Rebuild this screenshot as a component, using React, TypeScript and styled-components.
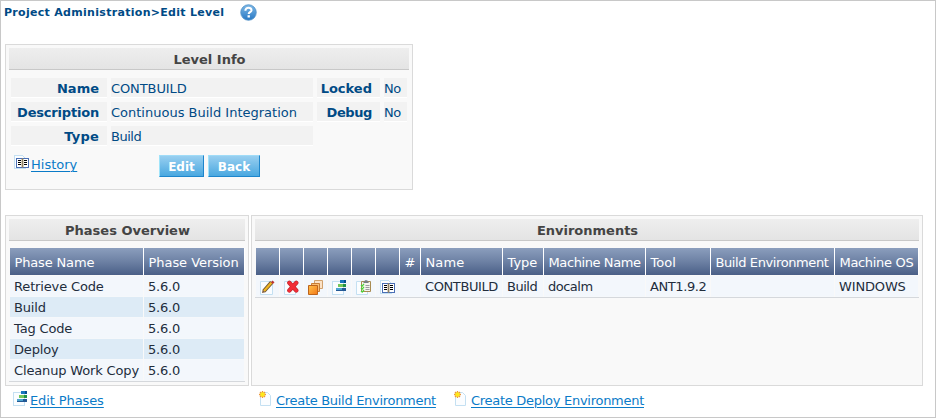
import React from "react";
import styled, { createGlobalStyle } from "styled-components";

const Global = createGlobalStyle`
  * { box-sizing: border-box; }
  body { margin: 0; background: #fff; font: 13px/16px Verdana, "DejaVu Sans", sans-serif; color: #263238; }
`;

const Page = styled.main`
  width: 936px;
  height: 418px;
  border: 1px solid #c8c8c8;
  padding: 0 4px;
`;

const TitleBar = styled.header`
  display: flex;
  height: 43px;
  margin-left: -1px;
  padding-top: 3px;
  color: #004a85;
`;

const Title = styled.h1`
  margin: 0 15px 0 0;
  width: 221px;
  white-space: nowrap;
  font-size: 11px;
  line-height: 18px;
  letter-spacing: 0.3px;
`;

const Panel = styled.section<{ $w: number; $h: number }>`
  width: ${p => p.$w}px;
  height: ${p => p.$h}px;
  border: 1px solid #dadada;
  background: #f9f9f9;
  padding: 3px;
`;

const PanelTitle = styled.h2`
  margin: 0;
  height: 22px;
  padding-left: 1px;
  border-bottom: 1px solid #c8c8c8;
  background: linear-gradient(#eee, #e4e4e4);
  color: #444;
  font-size: 13px;
  line-height: 23px;
  text-align: center;
`;

const InfoGrid = styled.div`
  display: grid;
  grid-template-columns: 96px 202px 63px 23px;
  grid-auto-rows: 20px;
  gap: 4px;
  margin: 8px 2px 0;
  color: #004a85;
`;

const InfoValue = styled.div<{ $ls?: number }>`
  background: #f2f2f2;
  border-bottom: 1px solid #fff;
  line-height: 21px;
  white-space: nowrap;
  letter-spacing: ${p => p.$ls ?? 0}px;
`;

const InfoLabel = styled(InfoValue)`
  text-align: right;
  padding-right: 8px;
  font-weight: bold;
`;

const Actions = styled.div`
  display: flex;
  margin: 9px 0 0 5px;
`;

const HistorySlot = styled.div`
  display: flex;
  gap: 1px;
  width: 145px;
`;

const Link = styled.a<{ $ls?: number }>`
  color: #0a7bc8;
  text-decoration: underline;
  text-underline-offset: 2px;
  text-decoration-thickness: 1px;
  white-space: nowrap;
  padding-top: 2px;
  letter-spacing: ${p => p.$ls ?? 0}px;
`;

const Button = styled.button<{ $w: number }>`
  width: ${p => p.$w}px;
  height: 22px;
  margin: 0 4px 0 0;
  padding: 2px 0 0;
  border: 1px solid;
  border-color: #a0dcf8 #1e86cc #1e86cc #a0e4fa;
  background: linear-gradient(#98cff0, #4aa8e0);
  color: #fff;
  font: bold 12px/18px Verdana, "DejaVu Sans", sans-serif;
`;

const Columns = styled.div`
  display: flex;
  gap: 2px;
  margin-top: 25px;
`;

const Table = styled.div<{ $cols: string }>`
  display: grid;
  grid-template-columns: ${p => p.$cols};
  column-gap: 1px;
  margin-top: 7px;
  padding: 0 1px;
  border-bottom: 1px solid #d5d8dc;
  background: #f9f9f9;
`;

const HeadCell = styled.div<{ $ls?: number }>`
  height: 27px;
  margin-bottom: 1px;
  padding-left: 4.5px;
  background: linear-gradient(#8b9ebd, #6d81a4 50%, #4a5f87);
  box-shadow: 1px 0 #fff;
  color: #fff;
  line-height: 29px;
  white-space: nowrap;
  letter-spacing: ${p => p.$ls ?? 0}px;
`;

const Cell = styled.div<{ $alt?: boolean; $ls?: number }>`
  height: 20px;
  margin-bottom: 1px;
  padding-left: 4px;
  background: ${p => (p.$alt ? "#ddebf6" : "#f3f7fc")};
  box-shadow: 0 1px #f5f8fb;
  line-height: 21px;
  color: #222d3c;
  white-space: nowrap;
  letter-spacing: ${p => p.$ls ?? 0}px;
`;

const IconCell = styled(Cell)`
  padding-top: 4px;
`;

const Footer = styled.footer`
  display: flex;
  padding: 5px 0 0 8px;
`;

const FooterItem = styled.div<{ $w: number }>`
  display: flex;
  gap: 1px;
  width: ${p => p.$w}px;
`;

const Svg = styled.svg<{ $size?: number }>`
  display: block;
  flex: none;
  width: ${p => p.$size ?? 16}px;
  height: ${p => p.$size ?? 16}px;
`;

const HelpIcon = () => (
  <Svg viewBox="0 0 16 16" $size={17}>
    <defs>
      <linearGradient id="help" x2="0" y2="1">
        <stop stopColor="#7db8e6" />
        <stop offset="1" stopColor="#2878c4" />
      </linearGradient>
    </defs>
    <circle cx="8" cy="8" r="7.3" fill="url(#help)" stroke="#5593c9" strokeWidth=".8" />
    <path d="M5.1 6.4c-.2-3.9 6-3.6 5.7-.4-.2 1.7-2.6 1.7-2.6 3.5" fill="none" stroke="#fff" strokeWidth="2" />
    <path d="M7.1 10.6h2.2v2.1H7.1z" fill="#fff" />
  </Svg>
);

const BookIcon = () => (
  <Svg viewBox="0 0 16 16" shapeRendering="crispEdges">
    <path d="M.5.5h8l3 3v10h-11z" fill="#fbfdff" stroke="#c4e0f2" />
    <path d="M2 3h13v10H2z" fill="#4a6fb5" />
    <path d="M3 4h11v8H3z" fill="#fff" />
    <path d="M8 3h1v10H8z" fill="#8c8069" />
    <path d="M7 4h1v8H7zM9 4h1v8H9z" fill="#d9cfba" />
    <path d="M4 5h3v1H4zM10 5h3v1h-3zM4 7h3v1H4zM10 7h3v1h-3zM4 9h3v1H4zM10 9h3v1h-3z" fill="#000" />
  </Svg>
);

const PencilIcon = () => (
  <Svg viewBox="0 0 16 16">
    <path d="M.5 1.5h12v13H.5z" fill="#fbfdff" stroke="#c4e0f2" />
    <path d="M4 11l7.6-8.6" stroke="#6e5430" strokeWidth="4" />
    <path d="M4 11l7.6-8.6" stroke="#f0b623" strokeWidth="2.2" />
    <path d="M10.9 2.3L12.4.6l2.1 1.7-1.6 1.8z" fill="#bc3430" />
    <path d="M2 13l.6-3.2 2.9 2.5z" fill="#805f42" />
  </Svg>
);

const DeleteIcon = () => (
  <Svg viewBox="0 0 16 16">
    <path d="M.5 1.5h11v13H.5z" fill="#fbfdff" stroke="#c4e0f2" />
    <path d="M5.3 2.8l7 7.7M12.3 2.8l-7 7.7" stroke="#c02a30" strokeWidth="4.3" strokeLinecap="round" />
    <path d="M5.3 2.8l7 7.7M12.3 2.8l-7 7.7" stroke="#f22c36" strokeWidth="3.1" strokeLinecap="round" />
  </Svg>
);

const StackIcon = () => (
  <Svg viewBox="0 0 16 16">
    <defs>
      <linearGradient id="stack" x2="1" y2="1">
        <stop stopColor="#ffc34c" />
        <stop offset="1" stopColor="#f47816" />
      </linearGradient>
    </defs>
    <path d="M6.5.5h8v8h-8z" fill="#fbe2c7" stroke="#d0a16d" />
    <path d="M3.5 3.5h8v8h-8z" fill="#f9bf76" stroke="#c77c35" />
    <path d="M.5 5.5h9v9h-9z" fill="url(#stack)" stroke="#bd641d" />
  </Svg>
);

const PhasesIcon = () => (
  <Svg viewBox="0 0 16 16" shapeRendering="crispEdges">
    <path d="M.5 1.5h11v13H.5z" fill="#fbfdff" stroke="#c4e0f2" />
    <path d="M8 0h6v3H8z" fill="#1976be" />
    <path d="M12 0h2v3h-2z" fill="#07508f" />
    <path d="M6 4h8v3H6z" fill="#76c85d" />
    <path d="M11 4h3v3h-3z" fill="#239246" />
    <path d="M4 8h10v3H4z" fill="#4ba5d2" />
    <path d="M10 8h4v3h-4zM4 10h10v1H4z" fill="#235995" />
  </Svg>
);

const ChecklistIcon = () => (
  <Svg viewBox="0 0 16 16">
    <path d="M.5 1.5h11v13H.5z" fill="#fbfdff" stroke="#c4e0f2" />
    <path d="M5.5 1.5h9v10h-9z" fill="#f4f4ed" stroke="#a98b52" />
    <path d="M7.5 3V1.5h1.3V.2h2.6v1.3h1.2V3z" fill="#777e86" />
    <path d="M9.5 5.5h4M9.5 7.5h4M9.5 9.5h4" stroke="#9a9d9f" />
    <path d="M5 5l1.2 1.2L8 3.8M5 8l1.2 1.2L8 6.8M5 11l1.2 1.2L8 9.8" fill="none" stroke="#4ad339" strokeWidth="1.2" />
  </Svg>
);

const NewIcon = () => (
  <Svg viewBox="0 0 16 16">
    <path d="M1.5 1.5h7l3 3v10h-10z" fill="#fbfdff" stroke="#c4e0f2" />
    <path d="M3.5 0v7M0 3.5h7M1 1l5 5M6 1L1 6" stroke="#ed9638" strokeWidth="1.3" />
    <circle cx="3.5" cy="3.5" r="2.2" fill="#ffe818" />
  </Svg>
);

const phases = ["Retrieve Code", "Build", "Tag Code", "Deploy", "Cleanup Work Copy"];

const envHeads: { text: string; ls?: number }[] = [
  ...Array.from({ length: 6 }, () => ({ text: "" })),
  { text: "#" },
  { text: "Name", ls: 0.1 },
  { text: "Type" },
  { text: "Machine Name", ls: -0.4 },
  { text: "Tool" },
  { text: "Build Environment", ls: -0.4 },
  { text: "Machine OS", ls: -0.32 },
];

const rowIcons = [PencilIcon, DeleteIcon, StackIcon, PhasesIcon, ChecklistIcon, BookIcon];

const envValues: { text: string; ls?: number }[] = [
  { text: "" },
  { text: "CONTBUILD", ls: -0.4 },
  { text: "Build", ls: -0.5 },
  { text: "docalm", ls: -0.5 },
  { text: "ANT1.9.2", ls: -0.4 },
  { text: "" },
  { text: "WINDOWS", ls: -0.15 },
];

export default function App() {
  return (
    <Page>
      <Global />
      <TitleBar>
        <Title>Project Administration&gt;Edit Level</Title>
        <HelpIcon />
      </TitleBar>
      <Panel $w={408} $h={146}>
        <PanelTitle>Level Info</PanelTitle>
        <InfoGrid>
          <InfoLabel>Name</InfoLabel>
          <InfoValue $ls={-0.1}>CONTBUILD</InfoValue>
          <InfoLabel>Locked</InfoLabel>
          <InfoValue $ls={-0.4}>No</InfoValue>
          <InfoLabel $ls={-0.2}>Description</InfoLabel>
          <InfoValue>Continuous Build Integration</InfoValue>
          <InfoLabel $ls={-0.4}>Debug</InfoLabel>
          <InfoValue $ls={-0.4}>No</InfoValue>
          <InfoLabel $ls={0.2}>Type</InfoLabel>
          <InfoValue $ls={-0.5}>Build</InfoValue>
        </InfoGrid>
        <Actions>
          <HistorySlot>
            <BookIcon />
            <Link>History</Link>
          </HistorySlot>
          <Button $w={45}>Edit</Button>
          <Button $w={52}>Back</Button>
        </Actions>
      </Panel>
      <Columns>
        <Panel $w={244} $h={171}>
          <PanelTitle>Phases Overview</PanelTitle>
          <Table $cols="133px 100px">
            <HeadCell $ls={-0.15}>Phase Name</HeadCell>
            <HeadCell $ls={-0.05}>Phase Version</HeadCell>
            {phases.map((name, i) => (
              <React.Fragment key={name}>
                <Cell $alt={i % 2 === 1} $ls={-0.15}>{name}</Cell>
                <Cell $alt={i % 2 === 1} $ls={-0.2}>5.6.0</Cell>
              </React.Fragment>
            ))}
          </Table>
        </Panel>
        <Panel $w={672} $h={171}>
          <PanelTitle>Environments</PanelTitle>
          <Table $cols="repeat(6, 23px) 20px 81px 40px 101px 64px 123px 83px">
            {envHeads.map((head, i) => <HeadCell key={i} $ls={head.ls}>{head.text}</HeadCell>)}
            {rowIcons.map((Icon, i) => <IconCell key={i}><Icon /></IconCell>)}
            {envValues.map((value, i) => <Cell key={i} $ls={value.ls}>{value.text}</Cell>)}
          </Table>
        </Panel>
      </Columns>
      <Footer>
        <FooterItem $w={246}><PhasesIcon /><Link $ls={-0.1}>Edit Phases</Link></FooterItem>
        <FooterItem $w={195}><NewIcon /><Link $ls={-0.3}>Create Build Environment</Link></FooterItem>
        <FooterItem $w={200}><NewIcon /><Link $ls={-0.28}>Create Deploy Environment</Link></FooterItem>
      </Footer>
    </Page>
  );
}
